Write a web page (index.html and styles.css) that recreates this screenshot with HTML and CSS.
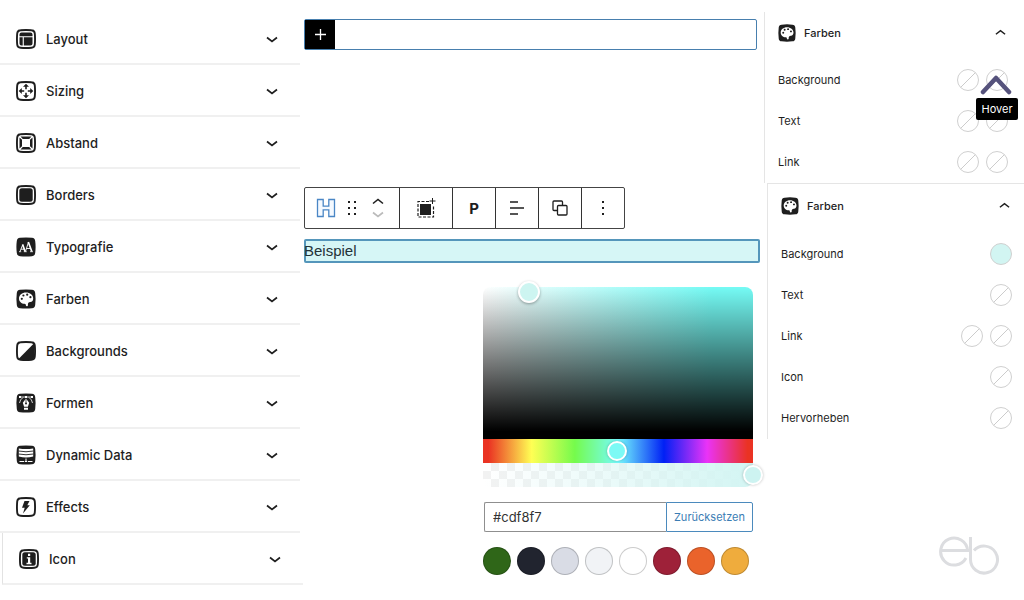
FILE: index.html
```html
<!DOCTYPE html>
<html lang="de">
<head>
<meta charset="utf-8">
<title>Block-Einstellungen</title>
<link rel="stylesheet" href="styles.css">
</head>
<body>
<svg class="defs" aria-hidden="true">
  <symbol id="frame" viewBox="0 0 20 20"><path d="M4 .8Q10 0 16 .8 19 1 19.200 4 20 10 19.200 16 19 19 16 19.200 10 20 4 19.200 1 19 .8 16 0 10 .8 4 1 1 4 .8Z"/></symbol>
  <symbol id="ring" viewBox="0 0 20 20"><path d="M4.500 1.200Q10 .7 15.500 1.200 18.600 1.400 18.800 4.500 19.300 10 18.800 15.500 18.600 18.600 15.500 18.800 10 19.300 4.500 18.800 1.400 18.600 1.200 15.500 .7 10 1.200 4.500 1.400 1.400 4.500 1.200Z" fill="#fff" stroke="#1e1e1e" stroke-width="1.900"/></symbol>
  <symbol id="palette" viewBox="0 0 20 20"><use href="#frame"/><path d="M10 3.500c-4 0-7 2.600-7 6 0 3.200 2.600 5.300 5.400 5.300 1.300 0 1.400.8 1.500 1.600.2 1.100 2 1 2-.2-.2-2.200.7-3.200 2.400-3.200 1.900 0 2.900-1.300 2.900-3.500 0-3.500-3.200-6-7.200-6Z" fill="#fff"/><g fill="#1e1e1e"><circle cx="5.800" cy="9.800" r="1.100"/><circle cx="7.400" cy="6.500" r="1.100"/><circle cx="11.200" cy="5.700" r="1.100"/><circle cx="14.400" cy="8.200" r="1.100"/></g></symbol>
  <symbol id="down" viewBox="0 0 12 8"><path d="m1 1.500 5 4 5-4" fill="none" stroke="currentColor" stroke-width="1.700"/></symbol>
  <symbol id="up" viewBox="0 0 12 8"><path d="m1 6.500 5-4 5 4" fill="none" stroke="currentColor" stroke-width="1.600"/></symbol>
</svg>
<div class="app">
  <nav class="sections" aria-label="Bereiche">
    <button class="section"><svg class="icon" viewBox="0 0 20 20"><use href="#ring"/><path d="M3.500 5.500q0-2 2-2h9q2 0 2 2v1.700h-13ZM3.500 8.300h3.200v8.200H5.500q-2 0-2-2ZM7.800 8.300h8.700v6.200q0 2-2 2H7.800Z"/></svg><span>Layout</span><svg class="chevron"><use href="#down"/></svg></button>
    <button class="section"><svg class="icon" viewBox="0 0 20 20"><use href="#ring"/><path d="m10 2.700 3 3.100h-2.200v2.400H9.200V5.800H7ZM10 17.300l-3-3.100h2.200v-2.400h1.600v2.400H13ZM2.700 10l3.100-3v2.200h2.400v1.600H5.800V13ZM17.300 10l-3.100 3v-2.200h-2.400V9.200h2.400V7Z"/></svg><span>Sizing</span><svg class="chevron"><use href="#down"/></svg></button>
    <button class="section"><svg class="icon" viewBox="0 0 20 20"><use href="#ring"/><path d="M4.500 3.500h11L13.200 6H6.800ZM4.500 16.500h11L13.200 14H6.800ZM3.500 4.500 6 6.800v6.400l-2.500 2.300ZM16.500 4.500 14 6.800v6.400l2.500 2.300Z"/></svg><span>Abstand</span><svg class="chevron"><use href="#down"/></svg></button>
    <button class="section"><svg class="icon" viewBox="0 0 20 20"><use href="#ring"/><rect x="3.300" y="3.300" width="13.400" height="13.400" rx="2.500"/></svg><span>Borders</span><svg class="chevron"><use href="#down"/></svg></button>
    <button class="section"><svg class="icon" viewBox="0 0 20 20"><use href="#frame"/><g fill="none" stroke="#fff"><path d="m4 14.500 2.800-7M5 12.200h3.500M9.500 14.500l3-9.500M10.500 11.500h4.500" stroke-width=".9"/><path d="m6.600 7.500 2.500 7M12.300 5l3.500 9.500" stroke-width="1.700"/><path d="M3 14.700h2.200M7.800 14.700h3M14 14.700h3" stroke-width=".8"/></g></svg><span>Typografie</span><svg class="chevron"><use href="#down"/></svg></button>
    <button class="section"><svg class="icon"><use href="#palette"/></svg><span>Farben</span><svg class="chevron"><use href="#down"/></svg></button>
    <button class="section"><svg class="icon" viewBox="0 0 20 20"><use href="#ring"/><path d="M18.300 2v13.500q-.3 3-3 3H2Z"/></svg><span>Backgrounds</span><svg class="chevron"><use href="#down"/></svg></button>
    <button class="section"><svg class="icon" viewBox="0 0 20 20"><use href="#frame"/><g fill="none" stroke="#fff" stroke-width=".8"><path d="M4 4h12M7 4.500q-3 2-3.500 5.500M13 4.500q3 2 3.500 5.500"/></g><path d="m10 5.500 3.200 4.300-1.300 4H8.100l-1.300-4ZM8 14.700h4v2H8ZM3 3h2v2H3ZM15 3h2v2h-2ZM9 3h2v2H9Z" fill="#fff"/><path d="M10 6v4" stroke="#1e1e1e" stroke-width=".7"/><circle cx="10" cy="10.500" r="1"/></svg><span>Formen</span><svg class="chevron"><use href="#down"/></svg></button>
    <button class="section"><svg class="icon" viewBox="0 0 20 20"><use href="#frame"/><path d="M2.800 3.500q7.200 1.200 14.400 0v8q-7.200 2-14.400 0Z" fill="#fff"/><path d="M2.500 6q7.500 1.500 15 0M2.500 9q7.500 1.500 15 0" fill="none" stroke="#1e1e1e" stroke-width=".9"/><path d="M10 13.500v3M3.500 16.500H8M12 16.500h4.500M8.800 16.500h2.400" stroke="#fff"/></svg><span>Dynamic Data</span><svg class="chevron"><use href="#down"/></svg></button>
    <button class="section"><svg class="icon" viewBox="0 0 20 20"><use href="#ring"/><path d="M8.500 4h5l-2.200 4.300h2.500L7 16.500l1.700-5.700H6Z"/></svg><span>Effects</span><svg class="chevron"><use href="#down"/></svg></button>
    <button class="section section-nested"><svg class="icon" viewBox="0 0 20 20"><use href="#ring"/><rect x="3.300" y="3.300" width="13.400" height="13.400" rx="2.500"/><path d="M9 4.800h2.200V7H9ZM7.800 8.200h3.400v5.600h1.300v1.400h-5v-1.400H9V9.600H7.800Z" fill="#fff"/></svg><span>Icon</span><svg class="chevron"><use href="#down"/></svg></button>
  </nav>

  <main class="editor">
    <div class="inserter">
      <button class="add" aria-label="Block hinzufügen"><svg width="13" height="13" viewBox="0 0 13 13"><path d="M6.500 1v11M1 6.500h11" stroke="#fff" stroke-width="1.300"/></svg></button>
    </div>
    <div class="toolbar" role="toolbar" aria-label="Block-Werkzeuge">
      <div class="tools tools-move">
        <button aria-label="Überschrift"><svg width="20" height="20" viewBox="0 0 20 20"><path d="M1.500 1.500h5.700v6.700h5.600V1.500h5.700v17h-5.700v-6.700H7.200v6.700H1.500Z" fill="#f4f9ff" stroke="#4a86c5" stroke-width="1.300"/></svg></button>
        <button aria-label="Ziehen"><svg width="8" height="14" viewBox="0 0 8 14"><path d="M0 0h2v2H0ZM6 0h2v2H6ZM0 6h2v2H0ZM6 6h2v2H6ZM0 12h2v2H0ZM6 12h2v2H6Z"/></svg></button>
        <div class="movers"><button aria-label="Nach oben"><svg width="12" height="8"><use href="#up"/></svg></button><button class="muted" aria-label="Nach unten"><svg width="12" height="8"><use href="#down"/></svg></button></div>
      </div>
      <button class="tools tools-wide" aria-label="Container"><svg width="20" height="20" viewBox="0 0 20 20"><path d="M4 6h11v11H4Z"/><path d="M13 3.500H2V19h15.500V8" fill="none" stroke="#1e1e1e" stroke-width="1.200" stroke-dasharray="3 1.500"/><path d="M16.500 0v6M13.500 3h6" stroke="#1e1e1e"/></svg></button>
      <button class="tools letter">P</button>
      <button class="tools" aria-label="Ausrichtung"><svg width="16" height="14" viewBox="0 0 16 14"><path d="M1 1h8M1 7h14M1 13h8" stroke="#1e1e1e" stroke-width="1.400"/></svg></button>
      <button class="tools" aria-label="Kopieren"><svg width="16" height="16" viewBox="0 0 16 16"><g fill="#fff" stroke="#1e1e1e" stroke-width="1.300"><rect x="1" y="1" width="9.500" height="9.500" rx="1"/><rect x="5.500" y="5.500" width="9.500" height="9.500" rx="1"/></g></svg></button>
      <button class="tools" aria-label="Optionen"><svg width="2" height="14" viewBox="0 0 2 14"><path d="M0 0h2v2H0ZM0 6h2v2H0ZM0 12h2v2H0Z"/></svg></button>
    </div>
    <div class="sample">Beispiel</div>

    <section class="picker" aria-label="Farbauswahl">
      <div class="spectrum"><button class="handle" aria-label="Sättigung und Helligkeit"></button></div>
      <div class="track hue"><input type="range" min="0" max="360" value="179" aria-label="Farbton"></div>
      <div class="track alpha"><input type="range" min="0" max="100" value="100" aria-label="Deckkraft"></div>
      <div class="field"><input type="text" value="#cdf8f7" aria-label="Hex-Farbe"><button>Zurücksetzen</button></div>
      <div class="swatches">
        <button class="green" aria-label="Grün"></button><button class="navy" aria-label="Nachtblau"></button><button class="gray" aria-label="Grau"></button><button class="light" aria-label="Hellgrau"></button><button class="white" aria-label="Weiß"></button><button class="crimson" aria-label="Rot"></button><button class="orange" aria-label="Orange"></button><button class="amber" aria-label="Gelb"></button>
      </div>
    </section>
  </main>

  <aside class="colors">
    <section class="panel">
      <button class="panel-head"><svg class="icon-small"><use href="#palette"/></svg><span>Farben</span><svg class="chevron-small"><use href="#up"/></svg></button>
      <div class="row"><span>Background</span><button class="none" aria-label="Background"></button><span class="hover-target"><button class="none" aria-label="Background Hover"></button>
        <svg class="pointer" width="32" height="22" viewBox="0 0 32 22"><path d="M3 18 16 4l13 14" fill="none" stroke="#55527c" stroke-width="4.500" stroke-linecap="round" stroke-linejoin="round"/></svg>
        <span class="tooltip" role="tooltip">Hover</span></span></div>
      <div class="row"><span>Text</span><button class="none" aria-label="Text"></button><button class="none" aria-label="Text Hover"></button></div>
      <div class="row"><span>Link</span><button class="none" aria-label="Link"></button><button class="none" aria-label="Link Hover"></button></div>
    </section>
    <section class="panel panel-active">
      <button class="panel-head"><svg class="icon-small"><use href="#palette"/></svg><span>Farben</span><svg class="chevron-small"><use href="#up"/></svg></button>
      <div class="row"><span>Background</span><button class="none filled" aria-label="Background"></button></div>
      <div class="row"><span>Text</span><button class="none" aria-label="Text"></button></div>
      <div class="row"><span>Link</span><button class="none" aria-label="Link"></button><button class="none" aria-label="Link Hover"></button></div>
      <div class="row"><span>Icon</span><button class="none" aria-label="Icon"></button></div>
      <div class="row"><span>Hervorheben</span><button class="none" aria-label="Hervorheben"></button></div>
    </section>
    <svg class="logo" width="62" height="40" viewBox="0 0 62 40" role="img" aria-label="eb"><g fill="none" stroke="#dcdde0" stroke-width="3"><path d="M2 14.500h29M27 22A13.500 13.500 0 1 1 28.600 14.500"/><path d="M31.500 1v23M35 14.500A13.500 13.500 0 1 1 31.500 23.500"/></g></svg>
  </aside>
</div>
</body>
</html>
```
FILE: styles.css
```css
* { box-sizing: border-box; }
body { margin: 0; background: #fff; color: #1e1e1e; font-family: Inter, "Liberation Sans", sans-serif; }
button { margin: 0; padding: 0; border: 0; background: none; color: inherit; font: inherit; text-align: left; }
svg { display: block; flex: none; fill: #1e1e1e; }
.defs { position: absolute; width: 0; height: 0; }
.app { display: grid; grid-template-columns: 300px 1fr 260px; min-height: 100vh; }

.sections { display: flex; flex-direction: column; padding-top: 13px; }
.section { display: flex; align-items: center; gap: 10px; height: 52px; padding: 1px 22px 0 16px; border-bottom: 2px solid #f0f0f0; font-size: 13px; font-weight: 500; }
.section span, .panel-head span, .row > span:first-child { flex: 1; }
.section-nested { margin: 0 -3px 0 2px; border-left: 1px solid #e2e2e2; }
.icon { width: 20px; height: 20px; }
.icon-small { width: 18px; height: 18px; }
.chevron { width: 12px; height: 8px; margin-top: 3px; }
.chevron-small { width: 11px; height: 8px; margin-bottom: 2px; }

.editor { display: flex; flex-direction: column; padding: 19px 4px 0; }
.inserter { display: flex; height: 31px; margin-right: 3px; border: 1px solid #477fae; border-radius: 2px; }
.add { display: grid; place-items: center; width: 30px; background: #000; }
.toolbar { display: flex; align-self: flex-start; height: 42px; margin-top: 137px; border: 1px solid #444; border-radius: 2px; }
.tools { display: flex; align-items: center; justify-content: center; width: 43px; border-left: 1px solid #333; }
.tools-move { width: 94px; gap: 12px; padding-right: 4px; border-left: 0; }
.tools-wide { width: 53px; }
.movers { display: grid; gap: 6px; padding-left: 4px; }
.muted { color: #bbb; }
.letter { font-size: 15px; font-weight: 700; }
.sample { height: 24px; margin-top: 10px; border-radius: 2px; background: #d6f6f6; box-shadow: inset 0 0 0 2px #5596bb; color: #243238; font: 15px/24px "Liberation Sans", sans-serif; }

.picker { align-self: flex-end; width: 270px; margin: 24px 7px 0 0; }
.spectrum { position: relative; height: 152px; border-radius: 8px 8px 0 0; background: linear-gradient(transparent, #000 95%), linear-gradient(90deg, #fff, #75fbf5 85%); }
.handle { position: absolute; left: 17%; top: 3%; width: 22px; height: 22px; border: 2px solid #fff; border-radius: 50%; background: #cdf5f1; box-shadow: 0 1px 3px #0005; transform: translate(-50%, -50%); }
.track { height: 24px; }
.hue { background: linear-gradient(90deg, #ea3323 2%, #ffff54 18%, #75fb4c 34%, #75fbfd 50%, #0020f5 67%, #ea33f7 83%, #ea3323 98%); }
.alpha { border-radius: 0 0 8px 8px; background: linear-gradient(90deg, #fff3, #d3f5f3), repeating-conic-gradient(#efefef 0 25%, #fff 0 50%) 0 0 / 16px 16px; }
.track input { display: block; width: calc(100% + 20px); height: 24px; margin: 0 -10px; appearance: none; background: none; }
.track input::-webkit-slider-thumb { appearance: none; width: 20px; height: 20px; border: 2px solid #fff; border-radius: 50%; background: #7cfaf5; box-shadow: 0 0 3px #0004; }
.alpha input::-webkit-slider-thumb { background: #cdf3f1; }
.field { display: flex; height: 30px; margin: 15px 0 0 1px; }
.field input { flex: 1; min-width: 0; padding: 0 8px; border: 1px solid #8f8f8f; border-right: 0; border-radius: 2px 0 0 2px; color: #333; font: 13px Inter, sans-serif; }
.field button { padding: 0 7px; border: 1px solid #4b8abd; border-radius: 0 2px 2px 0; color: #3b7db4; font-size: 11px; }
.swatches { display: flex; gap: 6px; margin-top: 15px; }
.swatches button { width: 28px; height: 28px; border: 1px solid #0003; border-radius: 50%; }
.green { background: #2f6618; }
.navy { background: #21242f; }
.gray { background: #d9dce5; }
.light { background: #f1f3f6; }
.white { background: #fff; }
.crimson { background: #9e2139; }
.orange { background: #ea632b; }
.amber { background: #efac3d; }

.colors { display: flex; flex-direction: column; padding-top: 12px; }
.panel { padding: 0 16px 1px 13px; border-left: 1px solid #e5e5e5; }
.panel-active { margin-left: 3px; padding: 0 12px 1px 13px; border-top: 1px solid #e5e5e5; }
.panel-head { display: flex; align-items: center; gap: 8px; width: 100%; height: 42px; padding-right: 2px; font-size: 11px; font-weight: 500; }
.panel-head + .row { margin-top: 5px; }
.panel-active .panel-head { height: 44px; }
.row { display: flex; align-items: center; gap: 7px; height: 41px; font-size: 11px; }
.none { width: 22px; height: 22px; border: 1px solid #d0d0d0; border-radius: 50%; background: linear-gradient(135deg, #fff 48%, #ccc 48% 52%, #fff 52%); }
.filled { background: #d2f5f2; }
.hover-target { position: relative; height: 22px; }
.pointer { position: absolute; left: -6px; top: 5px; }
.tooltip { position: absolute; z-index: 1; left: -10px; top: 29px; width: 42px; height: 22px; border-radius: 2px; background: #000; color: #fff; font-size: 11px; line-height: 22px; text-align: center; }
.logo { align-self: flex-end; margin: 97px 23px 0 0; }
```
